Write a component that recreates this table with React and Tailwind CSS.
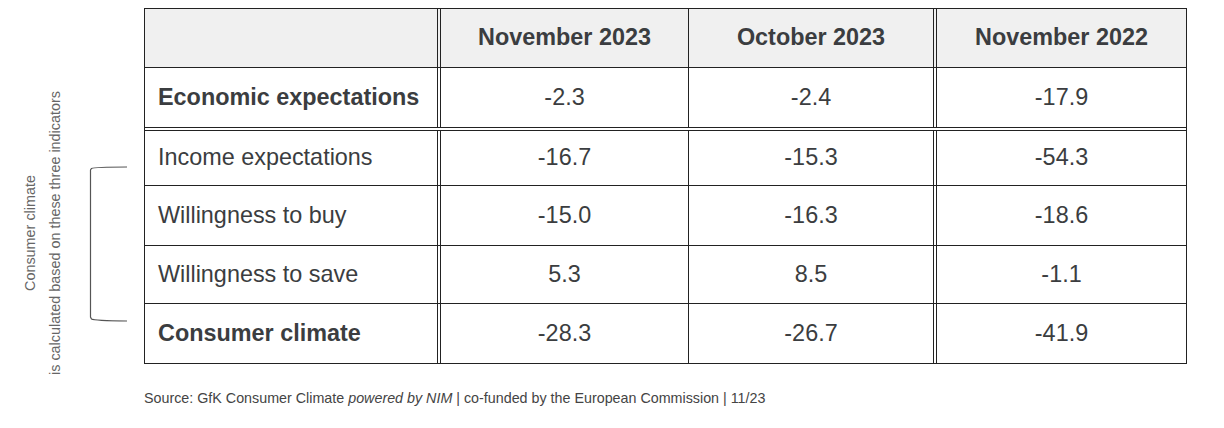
const columns = ['November 2023', 'October 2023', 'November 2022'];

const rows = [
  { label: 'Economic expectations', values: ['-2.3', '-2.4', '-17.9'], bold: true, h: 'h-[63px]', divider: 'border-b-4 border-double' },
  { label: 'Income expectations', values: ['-16.7', '-15.3', '-54.3'], h: 'h-[55px]', divider: 'border-b' },
  { label: 'Willingness to buy', values: ['-15.0', '-16.3', '-18.6'], h: 'h-[60px]', divider: 'border-b' },
  { label: 'Willingness to save', values: ['5.3', '8.5', '-1.1'], h: 'h-[58px]', divider: 'border-b' },
  { label: 'Consumer climate', values: ['-28.3', '-26.7', '-41.9'], bold: true, h: 'h-[59px]', divider: '' },
];

const colBorders = ['border-r border-[#222]', 'border-r-4 border-double border-[#222]', ''];
const colWidths = ['w-[248px]', 'w-[248px]', 'flex-1'];

const Row = ({ row }) => (
  <div className={`flex ${row.h} ${row.divider} border-[#222]`}>
    <div
      className={`w-[296px] flex items-center pl-[13px] border-r-4 border-double border-[#222] ${
        row.bold ? 'font-bold' : ''
      }`}
    >
      {row.label}
    </div>
    {row.values.map((v, i) => (
      <div key={i} className={`${colWidths[i]} ${colBorders[i]} flex items-center justify-center`}>
        {v}
      </div>
    ))}
  </div>
);

export default function App() {
  return (
    <div className="w-[1224px] h-[428px] bg-white flex pt-[8px] font-['Liberation_Sans',Arial,sans-serif]">
      {/* side note with bracket */}
      <div className="w-[144px] flex items-start shrink-0">
        <div className="ml-[18px] mt-[75px] w-[50px] h-[300px] flex items-center justify-center text-center text-[14.4px] leading-[25px] text-[#666] [writing-mode:vertical-rl] rotate-180 whitespace-nowrap">
          <span>
            Consumer climate
            <br />
            is calculated based on these three indicators
          </span>
        </div>
        <svg className="ml-[20px] mt-[158px]" width="40" height="156" viewBox="0 0 40 156" fill="none">
          <path
            d="M39 1 C 20 1 6 1.2 3.5 2.5 L 2.5 4 L 2.5 151 L 3.5 153 C 6 154.5 20 154.8 39 155"
            stroke="#555"
            strokeWidth="1.2"
          />
        </svg>
      </div>

      {/* table and source */}
      <div className="flex flex-col">
        <div className="w-[1043px] border border-[#222] text-[23.4px] text-[#3b3d40]">
          <div className="flex h-[59px] border-b border-[#222] bg-[#f0f0f0] font-bold">
            <div className="w-[296px] border-r-4 border-double border-[#222]" />
            {columns.map((c, i) => (
              <div key={c} className={`${colWidths[i]} ${colBorders[i]} flex items-center justify-center`}>
                {c}
              </div>
            ))}
          </div>
          {rows.map((r) => (
            <Row key={r.label} row={r} />
          ))}
        </div>
        <p className="mt-[26px] text-[14.3px] leading-[16px] text-[#444]">
          Source: GfK Consumer Climate <i>powered by NIM</i> | co-funded by the European Commission | 11/23
        </p>
      </div>
    </div>
  );
}
